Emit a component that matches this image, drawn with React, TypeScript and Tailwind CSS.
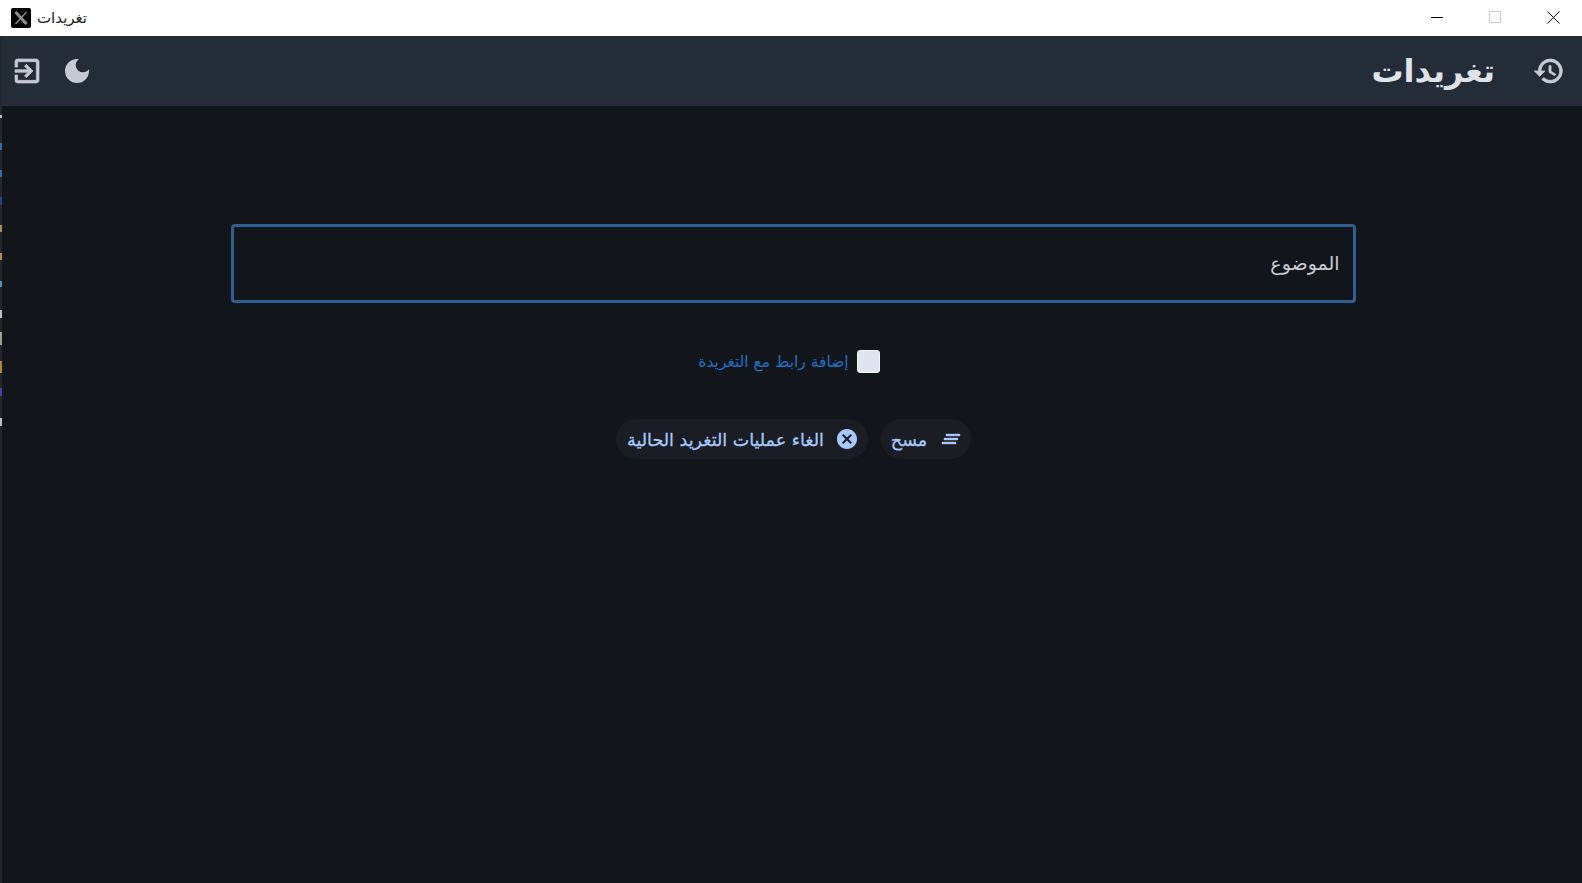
import { useState } from "react";
import { MdCancel, MdDarkMode } from "react-icons/md";

const font = "font-['DejaVu_Sans','Noto_Sans',sans-serif]";

// material glyphs, redrawn so they can take a heavier stroke
const Glyph = ({ d, size, weight }: { d: string; size: number; weight: number }) => (
  <svg width={size} height={size} viewBox="0 0 24 24" fill="currentColor" stroke="currentColor" strokeWidth={weight}>
    <path d={d} />
  </svg>
);

const historyPath =
  "M13 3a9 9 0 0 0-9 9H1l3.89 3.89.07.14L9 12H6c0-3.87 3.13-7 7-7s7 3.13 7 7-3.13 7-7 7c-1.93 0-3.68-.79-4.94-2.06l-1.42 1.42A8.954 8.954 0 0 0 13 21a9 9 0 0 0 0-18zm-1 5v5l4.28 2.54.72-1.21-3.5-2.08V8H12z";
const exitPath =
  "M10.09 15.59 11.5 17l5-5-5-5-1.41 1.41L12.67 11H3v2h9.67l-2.58 2.59zM19 3H5a2 2 0 0 0-2 2v4h2V5h14v14H5v-4H3v4a2 2 0 0 0 2 2h14c1.1 0 2-.9 2-2V5c0-1.1-.9-2-2-2z";
const clearPath = "M5 13h14v-2H5v2zm-2 4h14v-2H3v2zM7 7v2h14V7H7z";

const TitleBar = () => (
  <div dir="ltr" className="flex h-9 items-center justify-between bg-white pl-[11px]">
    <div className="flex items-center gap-[6px]">
      <div className="flex h-5 w-5 items-center justify-center rounded-[2px] bg-black">
        <svg width="14" height="14" viewBox="0 0 14 14" fill="none" stroke="#8f8f8f">
          <path d="M1.5 1 12.5 13" strokeWidth="3" />
          <path d="M12.5 1 1.5 13" strokeWidth="1.3" />
        </svg>
      </div>
      <span dir="rtl" className="text-[15px] text-[#222]">
        تغريدات
      </span>
    </div>
    <div className="flex items-center pb-0.5">
      <div className="flex h-8 w-[58px] items-center justify-center">
        <div className="h-px w-3 bg-black" />
      </div>
      <div className="flex h-8 w-[58px] items-center justify-center">
        <div className="h-3 w-3 border border-[#ccc]" />
      </div>
      <div className="flex h-8 w-[58px] items-center justify-center">
        <svg width="13" height="13" viewBox="0 0 13 13" stroke="#000" fill="none">
          <path d="M0.5 0.5 12.5 12.5M12.5 0.5 0.5 12.5" />
        </svg>
      </div>
    </div>
  </div>
);

const EdgeStrip = () => (
  <div className="flex w-0.5 shrink-0 flex-col bg-[#24282c] pt-[79px]">
    <div className="h-[3px] bg-[#bbb]" />
    <div className="mt-[25px] h-[7px] bg-[#2f6ea8]" />
    <div className="mt-5 h-[7px] bg-[#2f6ea8]" />
    <div className="mt-5 h-2 bg-[#2a3f8f]" />
    <div className="mt-5 h-[7px] bg-[#b08a50]" />
    <div className="mt-[21px] h-[7px] bg-[#b08a50]" />
    <div className="mt-[21px] h-[6px] bg-[#4a90c0]" />
    <div className="mt-[23px] h-2 bg-[#bbb]" />
    <div className="mt-[14px] h-[13px] bg-[#99a08f]" />
    <div className="mt-4 h-3 bg-[#b8862a]" />
    <div className="mt-[15px] h-2 bg-[#3f3fa0]" />
    <div className="mt-[22px] h-2 bg-[#bbb]" />
  </div>
);

const App = () => {
  const [checked, setChecked] = useState(false);

  return (
    <div dir="rtl" className={`flex h-[883px] w-[1582px] flex-col overflow-hidden bg-[#12161b] ${font}`}>
      <TitleBar />
      <div dir="ltr" className="flex grow">
        <EdgeStrip />
        <div dir="rtl" className="flex grow flex-col">
          <header className="flex h-[70px] items-center justify-between bg-[#242c38] pl-[9px] pr-[17px] text-[#c5cad3]">
            <div className="flex items-center gap-[38px]">
              <Glyph d={historyPath} size={32} weight={0.6} />
              <h1 className="text-[32px] font-bold leading-none text-[#dfe2e7]">تغريدات</h1>
            </div>
            <div className="flex items-center gap-[18px]">
              <MdDarkMode size={32} />
              <Glyph d={exitPath} size={32} weight={0.5} />
            </div>
          </header>

          <main className="flex flex-col items-center pl-0.5 pt-[118px]">
            <div className="flex h-[79px] w-[1125px] items-center rounded-[4px] border-[3px] border-[#2f5f92] px-[13px] text-[19px] text-[#c8ccd2]">
              الموضوع
            </div>

            <label className="mt-[47px] flex items-center gap-[8px] pr-2 text-[15.5px] text-[#1f6fc4]">
              <input
                type="checkbox"
                checked={checked}
                onChange={(e) => setChecked(e.target.checked)}
                className="h-[23px] w-[23px] appearance-none rounded-[3px] border border-[#f2f4f8] bg-[#dfe5f0]"
              />
              <span className="pt-[3px] leading-none">إضافة رابط مع التغريدة</span>
            </label>

            <div className="mt-[46px] flex items-center gap-[13px] text-[17.5px] text-[#a8c8fa] [-webkit-text-stroke:0.3px_#a8c8fa]">
              <button className="flex h-10 w-[90px] items-center justify-center gap-[12px] rounded-full bg-[#1a1e24] pl-[3px]">
                <Glyph d={clearPath} size={24} weight={0.4} />
                <span className="pt-[3px] leading-none">مسح</span>
              </button>
              <button className="flex h-10 w-[252px] items-center justify-center gap-[11px] rounded-full bg-[#1a1e24] pl-[3px]">
                <MdCancel size={24} />
                <span className="pt-[3px] leading-none">الغاء عمليات التغريد الحالية</span>
              </button>
            </div>
          </main>
        </div>
      </div>
    </div>
  );
};

export default App;
